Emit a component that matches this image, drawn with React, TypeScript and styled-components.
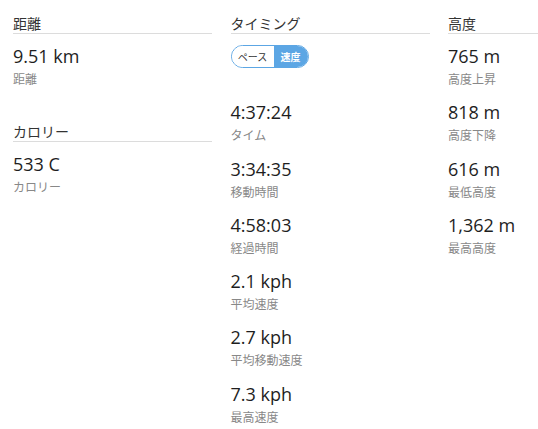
import React from "react";
import styled, { createGlobalStyle } from "styled-components";

const Global = createGlobalStyle`
  html, body { margin: 0; padding: 0; background: #fff; overflow: hidden; }
  body { font-family: "Open Sans", "Noto Sans CJK JP", sans-serif; }
`;

const Page = styled.div`
  display: grid;
  grid-template-columns: 199px 199px 199px;
  column-gap: 18.5px;
  padding: 14px 0 0 13px;
  width: 700px;
`;

const Column = styled.div`
  display: flex;
  flex-direction: column;
  gap: 34px;
`;

const Section = styled.section`
  display: flex;
  flex-direction: column;
`;

const Heading = styled.h2`
  margin: 0;
  font-size: 14px;
  font-weight: 400;
  line-height: 19px;
  color: #333;
  border-bottom: 1px solid #dcdcdc;
`;

const List = styled.div`
  display: flex;
  flex-direction: column;
  gap: 13.3px;
  padding-top: 11px;
`;

const Item = styled.div`
  display: flex;
  flex-direction: column;
  height: 43px;
`;

const Value = styled.div`
  font-size: 18px;
  line-height: 22px;
  color: #1e1e1e;
`;

const Label = styled.div`
  margin-top: 5px;
  font-size: 12px;
  line-height: 16px;
  color: #888;
`;

const ToggleRow = styled.div`
  height: 43px;
  display: flex;
  align-items: flex-start;
`;

const Toggle = styled.div`
  display: flex;
  height: 23px;
  border: 1px solid #5ca6e4;
  border-radius: 12px;
  overflow: hidden;
  box-sizing: border-box;
`;

const Seg = styled.span<{ $active?: boolean }>`
  display: flex;
  align-items: center;
  justify-content: center;
  width: ${(p) => (p.$active ? "34px" : "42px")};
  font-size: 10px;
  font-weight: ${(p) => (p.$active ? 700 : 400)};
  color: ${(p) => (p.$active ? "#fff" : "#333")};
  background: ${(p) => (p.$active ? "#5ca6e4" : "#fff")};
`;

type Stat = { v: string; l: string };

const Stats = ({ items }: { items: Stat[] }) => (
  <>
    {items.map((s) => (
      <Item key={s.l + s.v}>
        <Value>{s.v}</Value>
        <Label>{s.l}</Label>
      </Item>
    ))}
  </>
);

export default function App() {
  return (
    <>
      <Global />
      <Page>
        <Column>
          <Section>
            <Heading>距離</Heading>
            <List>
              <Stats items={[{ v: "9.51 km", l: "距離" }]} />
            </List>
          </Section>
          <Section>
            <Heading>カロリー</Heading>
            <List>
              <Stats items={[{ v: "533 C", l: "カロリー" }]} />
            </List>
          </Section>
        </Column>
        <Column>
          <Section>
            <Heading>タイミング</Heading>
            <List>
              <ToggleRow>
                <Toggle>
                  <Seg>ペース</Seg>
                  <Seg $active>速度</Seg>
                </Toggle>
              </ToggleRow>
              <Stats
                items={[
                  { v: "4:37:24", l: "タイム" },
                  { v: "3:34:35", l: "移動時間" },
                  { v: "4:58:03", l: "経過時間" },
                  { v: "2.1 kph", l: "平均速度" },
                  { v: "2.7 kph", l: "平均移動速度" },
                  { v: "7.3 kph", l: "最高速度" },
                ]}
              />
            </List>
          </Section>
        </Column>
        <Column>
          <Section>
            <Heading>高度</Heading>
            <List>
              <Stats
                items={[
                  { v: "765 m", l: "高度上昇" },
                  { v: "818 m", l: "高度下降" },
                  { v: "616 m", l: "最低高度" },
                  { v: "1,362 m", l: "最高高度" },
                ]}
              />
            </List>
          </Section>
        </Column>
      </Page>
    </>
  );
}
